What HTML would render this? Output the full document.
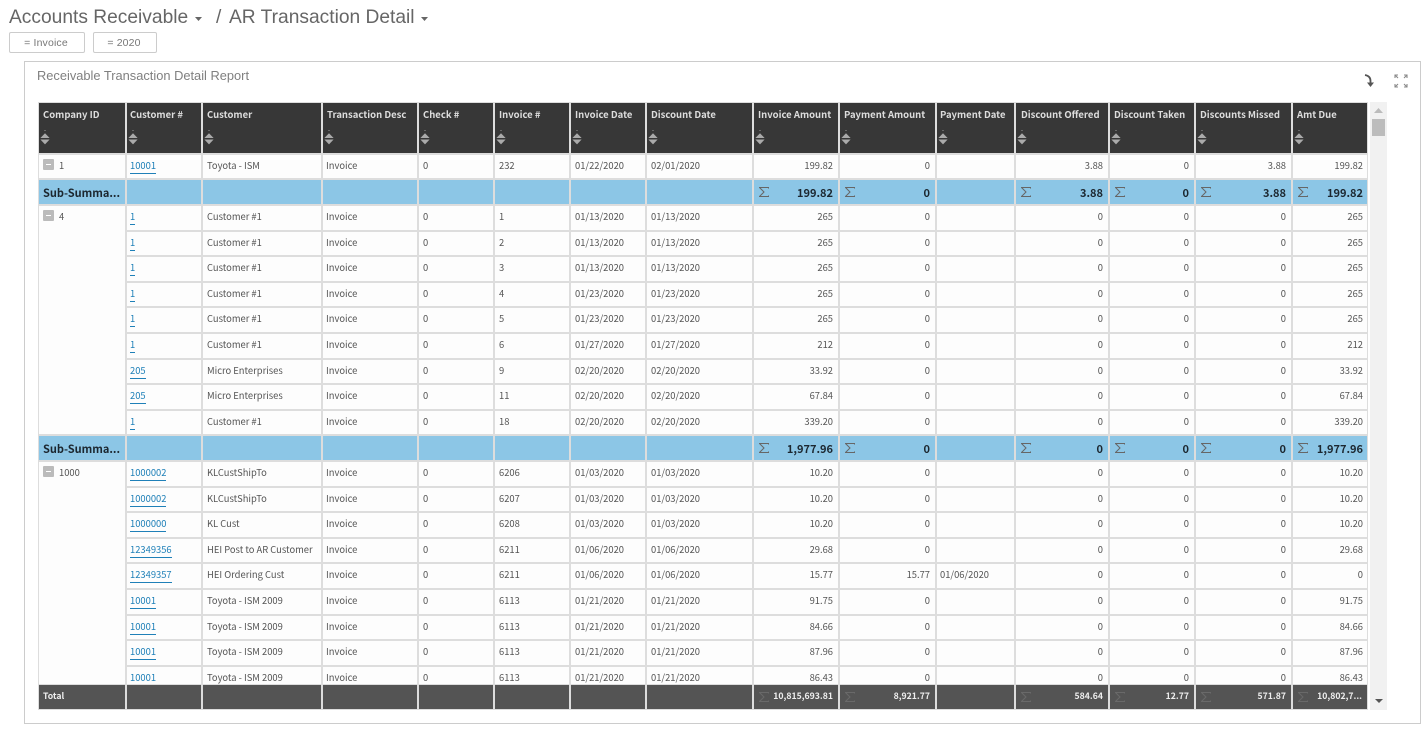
<!DOCTYPE html>
<html><head><meta charset="utf-8"><title>AR Transaction Detail</title>
<style>
html,body{margin:0;padding:0;background:#fff;width:1428px;height:731px;overflow:hidden}
body{font-family:"Noto Sans CJK JP","Liberation Sans",sans-serif;position:relative}
.t{position:absolute;font-family:"Liberation Sans",sans-serif;white-space:nowrap}
.f{position:absolute;top:32px;height:19px;border:1px solid #ccc;border-radius:2px;font:10.5px/21px "Liberation Sans",sans-serif;color:#777;text-align:center;letter-spacing:.15px;text-indent:-2px}
#panel{position:absolute;left:24px;top:61px;width:1395px;height:661px;border:1px solid #ccc}
#tb{position:absolute;left:38px;top:102px;width:1330px;height:608px;background:#ddd}
#clip{position:absolute;left:39px;top:103px;width:1328px;height:581px;overflow:hidden;background:#ddd}
.r{position:absolute;left:0;height:23.6px;width:1328px;display:grid;grid-template-columns:86px 74px 118px 94px 74px 74px 74px 105px 84px 95px 77px 92px 84px 95px 74px;column-gap:2px;font-size:9.4px;color:#555}
.r span{background:#fdfdfd;padding:0 4px;line-height:20px;white-space:nowrap;overflow:hidden;position:relative}
.r span:nth-child(2),.r span:nth-child(4),.r span:nth-child(11){padding-left:3px}
.r span:nth-child(9),.r span:nth-child(10),.r span:nth-child(n+12){text-align:right;padding-right:5px}
.r span:nth-child(15){padding-right:4px}
.r a{color:#1f80b8;border-bottom:1px solid #1f80b8;display:inline-block;line-height:13px;height:14px}
.s span{background:#8cc6e6;color:#1c2730;font-weight:700;font-size:11px;line-height:26px}
.s svg{position:absolute;left:5px;top:7px}
#h{position:absolute;left:0;top:0;height:50px;width:1328px;display:grid;grid-template-columns:86px 74px 118px 94px 74px 74px 74px 105px 84px 95px 77px 92px 84px 95px 74px;column-gap:2px}
#h span{background:#373737;color:#ddd;font-weight:700;font-size:9.5px;padding:4px 4px 0;line-height:14px;white-space:nowrap;position:relative}
#h span:nth-child(2),#h span:nth-child(11){padding-left:3px}
#h span:nth-child(12){padding-left:5px}
#h svg{position:absolute;left:1px;top:27px}
#tot{position:absolute;left:39px;top:685px;height:24px;width:1328px;display:grid;grid-template-columns:86px 74px 118px 94px 74px 74px 74px 105px 84px 95px 77px 92px 84px 95px 74px;column-gap:2px}
#tot span{background:#545454;color:#eee;font-weight:700;font-size:8.7px;line-height:21px;padding:0 4px;position:relative;white-space:nowrap}
#tot span:nth-child(n+9){text-align:right;padding-right:5px}
#tot svg{position:absolute;left:5px;top:7px;opacity:.3}
.g{position:absolute;left:0;width:86px;background:#fdfdfd;font-size:9.4px;color:#555}
.m{position:absolute;left:4px;top:4px;width:11px;height:11px;background:#bbb;border-radius:1px}
.m:after{content:"";position:absolute;left:3px;top:5px;width:5px;height:1px;background:#fff}
.g b{position:absolute;left:20px;top:1px;font-weight:400;line-height:18px}
#sb{position:absolute;left:1370px;top:102px;width:17px;height:608px;background:#f1f1f1}
</style></head>
<body>
<svg width="0" height="0" style="position:absolute"><defs>
<symbol id="x" viewBox="0 0 10 10"><path d="M9.500 1.500V.5H.5L5 5 .5 9.500h9v-1" fill="none" stroke="currentColor" stroke-width="1"/></symbol>
<symbol id="o" viewBox="0 0 10 16"><path d="M5 0v1" stroke="#999" stroke-width="1"/><path d="M5 3.200 9.600 8H.4z" fill="#aaa"/><path d="M.4 9.500h9.200L5 14.400z" fill="#aaa"/></symbol>
</defs></svg>

<div class="t" style="left:9px;top:6px;font-size:19.2px;line-height:23px;color:#666">Accounts Receivable</div>
<svg style="position:absolute;left:195px;top:17px" width="8" height="5"><path d="M0 0h7L3.500 4z" fill="#666"/></svg>
<div class="t" style="left:216px;top:6px;font-size:19.2px;line-height:23px;color:#666">/</div>
<div class="t" style="left:229px;top:6px;font-size:19.2px;line-height:23px;color:#666">AR Transaction Detail</div>
<svg style="position:absolute;left:421px;top:17px" width="8" height="5"><path d="M0 0h7L3.500 4z" fill="#666"/></svg>
<div class="f" style="left:9px;width:74px">= Invoice</div>
<div class="f" style="left:93px;width:62px">= 2020</div>

<div id="panel"></div>
<div class="t" style="left:37px;top:68px;font-size:12.85px;line-height:15px;color:#808080">Receivable Transaction Detail Report</div>

<svg style="position:absolute;left:1363px;top:73px" width="14" height="15"><path d="M2 2C5 2.500 7.500 4 7.500 8V10" fill="none" stroke="#555" stroke-width="1.800"/><path d="M4 9.500h7L7.500 14z" fill="#555"/></svg>
<svg style="position:absolute;left:1393px;top:73px" width="16" height="16" fill="none" stroke="#888" stroke-width="1.100"><path d="M2 5V2h3M2 2l3 3M11 2h3v3M14 2l-3 3M2 11v3h3M2 14l3-3M11 14h3v-3M14 14l-3-3"/></svg>

<div id="tb"></div>
<div id="clip">
<div id="h">
<span>Company ID<svg width="10" height="16"><use href="#o"/></svg></span><span>Customer #<svg width="10" height="16"><use href="#o"/></svg></span><span>Customer<svg width="10" height="16"><use href="#o"/></svg></span><span>Transaction Desc<svg width="10" height="16"><use href="#o"/></svg></span><span>Check #<svg width="10" height="16"><use href="#o"/></svg></span><span>Invoice #<svg width="10" height="16"><use href="#o"/></svg></span><span>Invoice Date<svg width="10" height="16"><use href="#o"/></svg></span><span>Discount Date<svg width="10" height="16"><use href="#o"/></svg></span><span>Invoice Amount<svg width="10" height="16"><use href="#o"/></svg></span><span>Payment Amount<svg width="10" height="16"><use href="#o"/></svg></span><span>Payment Date<svg width="10" height="16"><use href="#o"/></svg></span><span>Discount Offered<svg width="10" height="16"><use href="#o"/></svg></span><span>Discount Taken<svg width="10" height="16"><use href="#o"/></svg></span><span>Discounts Missed<svg width="10" height="16"><use href="#o"/></svg></span><span>Amt Due<svg width="10" height="16"><use href="#o"/></svg></span>
</div>

<div class="r" style="top:51.800px"><span></span><span><a>10001</a></span><span>Toyota - ISM</span><span>Invoice</span><span>0</span><span>232</span><span>01/22/2020</span><span>02/01/2020</span><span>199.82</span><span>0</span><span></span><span>3.88</span><span>0</span><span>3.88</span><span>199.82</span></div>
<div class="r s" style="top:77.400px"><span>Sub-Summa...</span><span></span><span></span><span></span><span></span><span></span><span></span><span></span><span><svg width="10" height="10" color="#666"><use href="#x"/></svg>199.82</span><span><svg width="10" height="10" color="#666"><use href="#x"/></svg>0</span><span></span><span><svg width="10" height="10" color="#666"><use href="#x"/></svg>3.88</span><span><svg width="10" height="10" color="#666"><use href="#x"/></svg>0</span><span><svg width="10" height="10" color="#666"><use href="#x"/></svg>3.88</span><span><svg width="10" height="10" color="#666"><use href="#x"/></svg>199.82</span></div>

<div class="r" style="top:103px"><span></span><span><a>1</a></span><span>Customer #1</span><span>Invoice</span><span>0</span><span>1</span><span>01/13/2020</span><span>01/13/2020</span><span>265</span><span>0</span><span></span><span>0</span><span>0</span><span>0</span><span>265</span></div>
<div class="r" style="top:128.600px"><span></span><span><a>1</a></span><span>Customer #1</span><span>Invoice</span><span>0</span><span>2</span><span>01/13/2020</span><span>01/13/2020</span><span>265</span><span>0</span><span></span><span>0</span><span>0</span><span>0</span><span>265</span></div>
<div class="r" style="top:154.200px"><span></span><span><a>1</a></span><span>Customer #1</span><span>Invoice</span><span>0</span><span>3</span><span>01/13/2020</span><span>01/13/2020</span><span>265</span><span>0</span><span></span><span>0</span><span>0</span><span>0</span><span>265</span></div>
<div class="r" style="top:179.800px"><span></span><span><a>1</a></span><span>Customer #1</span><span>Invoice</span><span>0</span><span>4</span><span>01/23/2020</span><span>01/23/2020</span><span>265</span><span>0</span><span></span><span>0</span><span>0</span><span>0</span><span>265</span></div>
<div class="r" style="top:205.400px"><span></span><span><a>1</a></span><span>Customer #1</span><span>Invoice</span><span>0</span><span>5</span><span>01/23/2020</span><span>01/23/2020</span><span>265</span><span>0</span><span></span><span>0</span><span>0</span><span>0</span><span>265</span></div>
<div class="r" style="top:231px"><span></span><span><a>1</a></span><span>Customer #1</span><span>Invoice</span><span>0</span><span>6</span><span>01/27/2020</span><span>01/27/2020</span><span>212</span><span>0</span><span></span><span>0</span><span>0</span><span>0</span><span>212</span></div>
<div class="r" style="top:256.600px"><span></span><span><a>205</a></span><span>Micro Enterprises</span><span>Invoice</span><span>0</span><span>9</span><span>02/20/2020</span><span>02/20/2020</span><span>33.92</span><span>0</span><span></span><span>0</span><span>0</span><span>0</span><span>33.92</span></div>
<div class="r" style="top:282.200px"><span></span><span><a>205</a></span><span>Micro Enterprises</span><span>Invoice</span><span>0</span><span>11</span><span>02/20/2020</span><span>02/20/2020</span><span>67.84</span><span>0</span><span></span><span>0</span><span>0</span><span>0</span><span>67.84</span></div>
<div class="r" style="top:307.800px"><span></span><span><a>1</a></span><span>Customer #1</span><span>Invoice</span><span>0</span><span>18</span><span>02/20/2020</span><span>02/20/2020</span><span>339.20</span><span>0</span><span></span><span>0</span><span>0</span><span>0</span><span>339.20</span></div>
<div class="r s" style="top:333.400px"><span>Sub-Summa...</span><span></span><span></span><span></span><span></span><span></span><span></span><span></span><span><svg width="10" height="10" color="#666"><use href="#x"/></svg>1,977.96</span><span><svg width="10" height="10" color="#666"><use href="#x"/></svg>0</span><span></span><span><svg width="10" height="10" color="#666"><use href="#x"/></svg>0</span><span><svg width="10" height="10" color="#666"><use href="#x"/></svg>0</span><span><svg width="10" height="10" color="#666"><use href="#x"/></svg>0</span><span><svg width="10" height="10" color="#666"><use href="#x"/></svg>1,977.96</span></div>

<div class="r" style="top:359px"><span></span><span><a>1000002</a></span><span>KLCustShipTo</span><span>Invoice</span><span>0</span><span>6206</span><span>01/03/2020</span><span>01/03/2020</span><span>10.20</span><span>0</span><span></span><span>0</span><span>0</span><span>0</span><span>10.20</span></div>
<div class="r" style="top:384.600px"><span></span><span><a>1000002</a></span><span>KLCustShipTo</span><span>Invoice</span><span>0</span><span>6207</span><span>01/03/2020</span><span>01/03/2020</span><span>10.20</span><span>0</span><span></span><span>0</span><span>0</span><span>0</span><span>10.20</span></div>
<div class="r" style="top:410.200px"><span></span><span><a>1000000</a></span><span>KL Cust</span><span>Invoice</span><span>0</span><span>6208</span><span>01/03/2020</span><span>01/03/2020</span><span>10.20</span><span>0</span><span></span><span>0</span><span>0</span><span>0</span><span>10.20</span></div>
<div class="r" style="top:435.800px"><span></span><span><a>12349356</a></span><span>HEI Post to AR Customer</span><span>Invoice</span><span>0</span><span>6211</span><span>01/06/2020</span><span>01/06/2020</span><span>29.68</span><span>0</span><span></span><span>0</span><span>0</span><span>0</span><span>29.68</span></div>
<div class="r" style="top:461.400px"><span></span><span><a>12349357</a></span><span>HEI Ordering Cust</span><span>Invoice</span><span>0</span><span>6211</span><span>01/06/2020</span><span>01/06/2020</span><span>15.77</span><span>15.77</span><span>01/06/2020</span><span>0</span><span>0</span><span>0</span><span>0</span></div>
<div class="r" style="top:487px"><span></span><span><a>10001</a></span><span>Toyota - ISM 2009</span><span>Invoice</span><span>0</span><span>6113</span><span>01/21/2020</span><span>01/21/2020</span><span>91.75</span><span>0</span><span></span><span>0</span><span>0</span><span>0</span><span>91.75</span></div>
<div class="r" style="top:512.600px"><span></span><span><a>10001</a></span><span>Toyota - ISM 2009</span><span>Invoice</span><span>0</span><span>6113</span><span>01/21/2020</span><span>01/21/2020</span><span>84.66</span><span>0</span><span></span><span>0</span><span>0</span><span>0</span><span>84.66</span></div>
<div class="r" style="top:538.200px"><span></span><span><a>10001</a></span><span>Toyota - ISM 2009</span><span>Invoice</span><span>0</span><span>6113</span><span>01/21/2020</span><span>01/21/2020</span><span>87.96</span><span>0</span><span></span><span>0</span><span>0</span><span>0</span><span>87.96</span></div>
<div class="r" style="top:563.800px"><span></span><span><a>10001</a></span><span>Toyota - ISM 2009</span><span>Invoice</span><span>0</span><span>6113</span><span>01/21/2020</span><span>01/21/2020</span><span>86.43</span><span>0</span><span></span><span>0</span><span>0</span><span>0</span><span>86.43</span></div>

<div class="g" style="top:52px;height:23px"><i class="m"></i><b>1</b></div>
<div class="g" style="top:103px;height:228px"><i class="m"></i><b>4</b></div>
<div class="g" style="top:359px;height:222px"><i class="m"></i><b>1000</b></div>
</div>

<div id="tot"><span>Total</span><span></span><span></span><span></span><span></span><span></span><span></span><span></span><span><svg width="10" height="10" color="#999"><use href="#x"/></svg>10,815,693.81</span><span><svg width="10" height="10" color="#999"><use href="#x"/></svg>8,921.77</span><span></span><span><svg width="10" height="10" color="#999"><use href="#x"/></svg>584.64</span><span><svg width="10" height="10" color="#999"><use href="#x"/></svg>12.77</span><span><svg width="10" height="10" color="#999"><use href="#x"/></svg>571.87</span><span><svg width="10" height="10" color="#999"><use href="#x"/></svg>10,802,7...</span></div>

<div id="sb">
<svg style="position:absolute;left:4px;top:6px" width="9" height="6"><path d="M0 5 4.500 0 9 5z" fill="#bbb"/></svg>
<div style="position:absolute;left:2px;top:17px;width:13px;height:17px;background:#bcbcbc"></div>
<svg style="position:absolute;left:5px;top:597px" width="8" height="5"><path d="M0 0h8L4 4z" fill="#555"/></svg>
</div>
</body></html>
